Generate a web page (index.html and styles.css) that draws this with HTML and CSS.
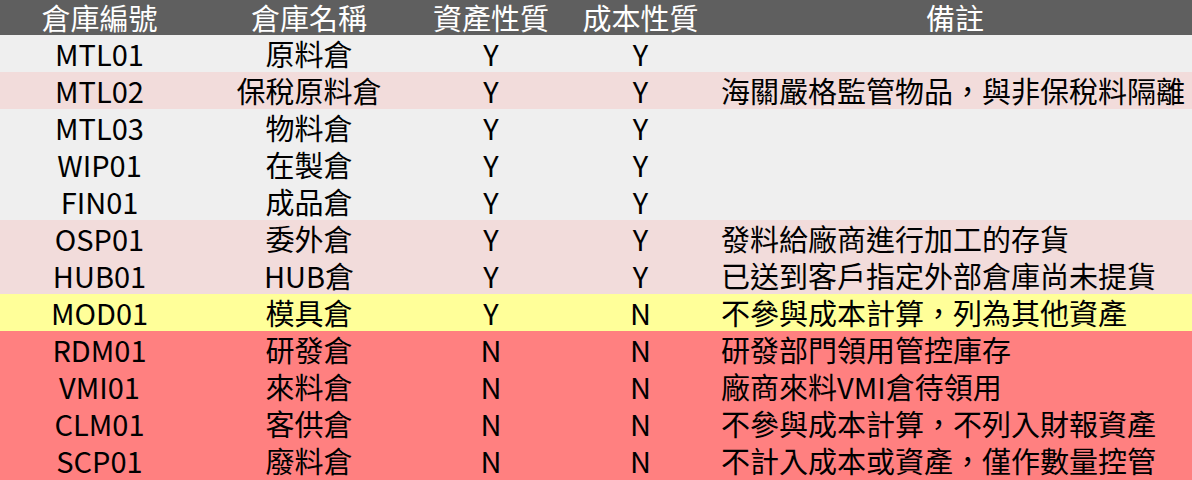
FILE: index.html
```html
<!DOCTYPE html>
<html lang="zh-Hant">
<head>
<meta charset="utf-8">
<title>倉庫</title>
<link rel="stylesheet" href="styles.css">
</head>
<body>
<table class="wh">
  <colgroup>
    <col class="c1"><col class="c2"><col class="c3"><col class="c4"><col class="c5">
  </colgroup>
  <thead>
    <tr class="head">
      <th>倉庫編號</th><th>倉庫名稱</th><th>資產性質</th><th>成本性質</th><th>備註</th>
    </tr>
  </thead>
  <tbody>
    <tr class="gray"><td>MTL01</td><td>原料倉</td><td>Y</td><td>Y</td><td class="note"></td></tr>
    <tr class="pink"><td>MTL02</td><td>保稅原料倉</td><td>Y</td><td>Y</td><td class="note">海關嚴格監管物品，與非保稅料隔離</td></tr>
    <tr class="gray"><td>MTL03</td><td>物料倉</td><td>Y</td><td>Y</td><td class="note"></td></tr>
    <tr class="gray"><td>WIP01</td><td>在製倉</td><td>Y</td><td>Y</td><td class="note"></td></tr>
    <tr class="gray"><td>FIN01</td><td>成品倉</td><td>Y</td><td>Y</td><td class="note"></td></tr>
    <tr class="pink"><td>OSP01</td><td>委外倉</td><td>Y</td><td>Y</td><td class="note">發料給廠商進行加工的存貨</td></tr>
    <tr class="pink"><td>HUB01</td><td>HUB倉</td><td>Y</td><td>Y</td><td class="note">已送到客戶指定外部倉庫尚未提貨</td></tr>
    <tr class="yellow"><td>MOD01</td><td>模具倉</td><td>Y</td><td>N</td><td class="note">不參與成本計算，列為其他資產</td></tr>
    <tr class="red"><td>RDM01</td><td>研發倉</td><td>N</td><td>N</td><td class="note">研發部門領用管控庫存</td></tr>
    <tr class="red"><td>VMI01</td><td>來料倉</td><td>N</td><td>N</td><td class="note">廠商來料VMI倉待領用</td></tr>
    <tr class="red"><td>CLM01</td><td>客供倉</td><td>N</td><td>N</td><td class="note">不參與成本計算，不列入財報資產</td></tr>
    <tr class="red"><td>SCP01</td><td>廢料倉</td><td>N</td><td>N</td><td class="note">不計入成本或資產，僅作數量控管</td></tr>
  </tbody>
</table>
</body>
</html>
```

FILE: styles.css
```css
html, body {
  margin: 0;
  padding: 0;
  background: #ff8080;
}

.wh {
  width: 1192px;
  table-layout: fixed;
  border-collapse: collapse;
  border-spacing: 0;
  font-family: "Noto Sans CJK TC", "Noto Sans", sans-serif;
  font-size: 29px;
  color: #000;
}

.c1 { width: 199px; }
.c2 { width: 220px; }
.c3 { width: 144px; }
.c4 { width: 155px; }
.c5 { width: 474px; }

.wh th,
.wh td {
  padding: 0;
  text-align: center;
  white-space: nowrap;
  line-height: 37px;
  height: 37px;
  font-weight: normal;
}

.head th {
  background: #5f5f5f;
  color: #ffffff;
  height: 35px;
  line-height: 35px;
}

.wh td.note {
  text-align: left;
  padding-left: 3px;
}

.gray td { background: #efefef; }
.pink td { background: #f2dcdb; }
.yellow td { background: #ffff99; }
.red td { background: #ff8080; }
```
